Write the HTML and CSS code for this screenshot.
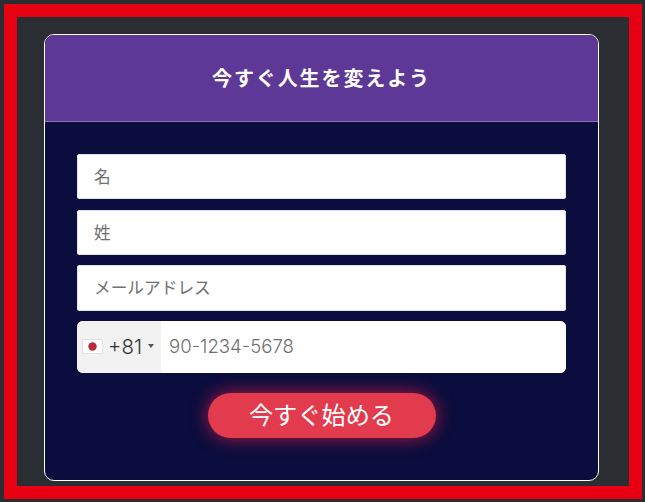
FILE: index.html
```html
<!DOCTYPE html>
<html lang="ja">
<head>
    <meta charset="UTF-8">
    <meta name="viewport" content="width=device-width, initial-scale=1.0">
    <title>今すぐ人生を変えよう</title>
    <link rel="stylesheet" href="styles.css">
</head>
<body>

    <div class="frame">
        <div class="card">
            <div class="card-header">
                <h2>今すぐ人生を変えよう</h2>
            </div>
            <form class="card-body">
                <input class="field" type="text" placeholder="名">
                <input class="field field-last-name" type="text" placeholder="姓">
                <input class="field field-email" type="text" placeholder="メールアドレス">

                <!-- Phone with country picker -->
                <div class="phone">
                    <div class="country">
                        <svg class="flag" width="21" height="15" viewBox="0 0 21 15">
                            <rect x="0.5" y="0.5" width="20" height="14" fill="#fff" stroke="#e2e2e2"/>
                            <circle cx="10.5" cy="7.5" r="4.2" fill="#b82a3c"/>
                        </svg>
                        <span class="dial">+81</span>
                        <span class="caret"></span>
                    </div>
                    <input class="phone-input" type="text" placeholder="90-1234-5678">
                </div>

                <button class="submit" type="button">今すぐ始める</button>
            </form>
        </div>
    </div>

</body>
</html>
```

FILE: styles.css
```css
* {
    margin: 0;
    padding: 0;
    box-sizing: border-box;
    font-family: 'Noto Sans CJK JP', 'Noto Sans', sans-serif;
}
body {
    background: #2a2e32;
    padding: 4px 3px 3px 4px;
}
.frame {
    height: 495px;
    border: 13px solid #e60012;
    padding: 17px 30px 4px 27px;
}
.card {
    height: 447px;
    background: #0a0d3d;
    border: 1px solid #fff;
    border-radius: 10px;
    overflow: hidden;
}
.card-header {
    height: 87px;
    padding-bottom: 1px;
    background: #5e3896;
    border-bottom: 1px solid #8a70b4;
    display: flex;
    align-items: center;
    justify-content: center;
}
.card-header h2 {
    color: #fff;
    font-size: 20px;
    font-weight: 700;
    letter-spacing: 1.9px;
    line-height: 1;
}
.card-body {
    display: flex;
    flex-direction: column;
    align-items: center;
    padding: 32px 32px 0;
}
.field {
    width: 100%;
    height: 45px;
    margin-bottom: 11px;
    padding: 0 16px 1px;
    border: 1px solid #dfe3f0;
    border-radius: 2px;
    background: #fff;
    font-size: 16.7px;
}
.field-last-name {
    margin-bottom: 10px;
}
.field-email {
    height: 46px;
    margin-bottom: 10px;
    padding-bottom: 3px;
}
.field::placeholder, .phone-input::placeholder {
    color: #707070;
    opacity: 1;
}
.phone {
    width: 100%;
    height: 52px;
    display: flex;
    background: #fff;
    border-radius: 6px;
    overflow: hidden;
}
.country {
    width: 84px;
    display: flex;
    align-items: center;
    padding: 0 0 2px 5px;
    background: #f2f2f2;
}
.dial {
    margin-left: 5px;
    font-size: 20.5px;
    font-family: 'Inter', 'Noto Sans', sans-serif;
    font-weight: 300;
    color: #333;
}
.caret {
    margin-left: 6px;
    border-left: 3px solid transparent;
    border-right: 3px solid transparent;
    border-top: 4px solid #555;
}
.phone-input {
    flex: 1;
    min-width: 0;
    padding: 0 0 3px 8px;
    border: none;
    background: #fff;
    font-size: 18.6px;
    font-weight: 300;
    font-family: 'Inter', 'Noto Sans', sans-serif;
}
.submit {
    width: 228px;
    height: 45px;
    margin-top: 20px;
    padding-bottom: 4px;
    border: none;
    border-radius: 23px;
    background: #e23b4e;
    color: #fff;
    font-size: 24.2px;
    box-shadow: 0 0 18px rgba(235, 30, 70, 0.75);
}
```
